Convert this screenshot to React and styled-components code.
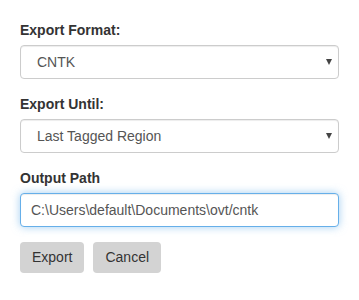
import React from "react";
import styled, { createGlobalStyle } from "styled-components";

const Global = createGlobalStyle`
  html, body { margin: 0; padding: 0; background: #fff; }
  body { font-family: "Liberation Sans", Arial, sans-serif; font-size: 14px; line-height: 1.42857; color: #333; }
  * { box-sizing: border-box; }
`;

const Form = styled.form`
  padding: 20px 20px 0 20px;
  display: flex;
  flex-direction: column;
`;

const Group = styled.div`
  display: flex;
  flex-direction: column;
  margin-bottom: 15px;
`;

const Label = styled.label`
  font-weight: bold;
  font-size: 14px;
  line-height: 20px;
  margin-bottom: 5px;
  color: #333;
`;

const SelectWrap = styled.div`
  position: relative;
  display: flex;
`;

const Select = styled.select`
  appearance: none;
  -webkit-appearance: none;
  width: 100%;
  height: 34px;
  padding: 6px 12px 6px 16px;
  font-family: inherit;
  font-size: 14px;
  color: #555;
  background: #fff;
  border: 1px solid #ccc;
  border-radius: 4px;
  box-shadow: inset 0 1px 1px rgba(0, 0, 0, 0.075);
  outline: none;
`;

const Caret = styled.span`
  position: absolute;
  right: 7px;
  top: 14px;
  width: 0;
  height: 0;
  border-left: 3.5px solid transparent;
  border-right: 3.5px solid transparent;
  border-top: 6px solid #444;
  pointer-events: none;
`;

const Input = styled.input`
  width: 100%;
  height: 34px;
  padding: 6px 10px;
  font-family: inherit;
  font-size: 14px;
  color: #555;
  background: #fff;
  border: 1px solid #66afe9;
  border-radius: 4px;
  outline: none;
  box-shadow: inset 0 1px 1px rgba(0, 0, 0, 0.075), 0 0 8px rgba(102, 175, 233, 0.6);
`;

const Actions = styled.div`
  display: flex;
  gap: 9px;
`;

const Button = styled.button`
  font-family: inherit;
  font-size: 14px;
  line-height: 19px;
  padding: 6px 12px;
  border: none;
  border-radius: 4px;
  background: #d3d3d3;
  color: #333;
  cursor: pointer;
`;

function Dropdown({ value, options }) {
  return (
    <SelectWrap>
      <Select defaultValue={value}>
        {options.map((o) => (
          <option key={o}>{o}</option>
        ))}
      </Select>
      <Caret />
    </SelectWrap>
  );
}

export default function App() {
  return (
    <>
      <Global />
      <Form onSubmit={(e) => e.preventDefault()}>
        <Group>
          <Label>Export Format:</Label>
          <Dropdown value="CNTK" options={["CNTK", "TFRecords", "YOLO"]} />
        </Group>
        <Group>
          <Label>Export Until:</Label>
          <Dropdown value="Last Tagged Region" options={["Last Tagged Region", "Last Visited Frame", "Last Frame"]} />
        </Group>
        <Group>
          <Label>Output Path</Label>
          <Input defaultValue="C:\Users\default\Documents\ovt/cntk" />
        </Group>
        <Actions>
          <Button type="button">Export</Button>
          <Button type="button">Cancel</Button>
        </Actions>
      </Form>
    </>
  );
}
